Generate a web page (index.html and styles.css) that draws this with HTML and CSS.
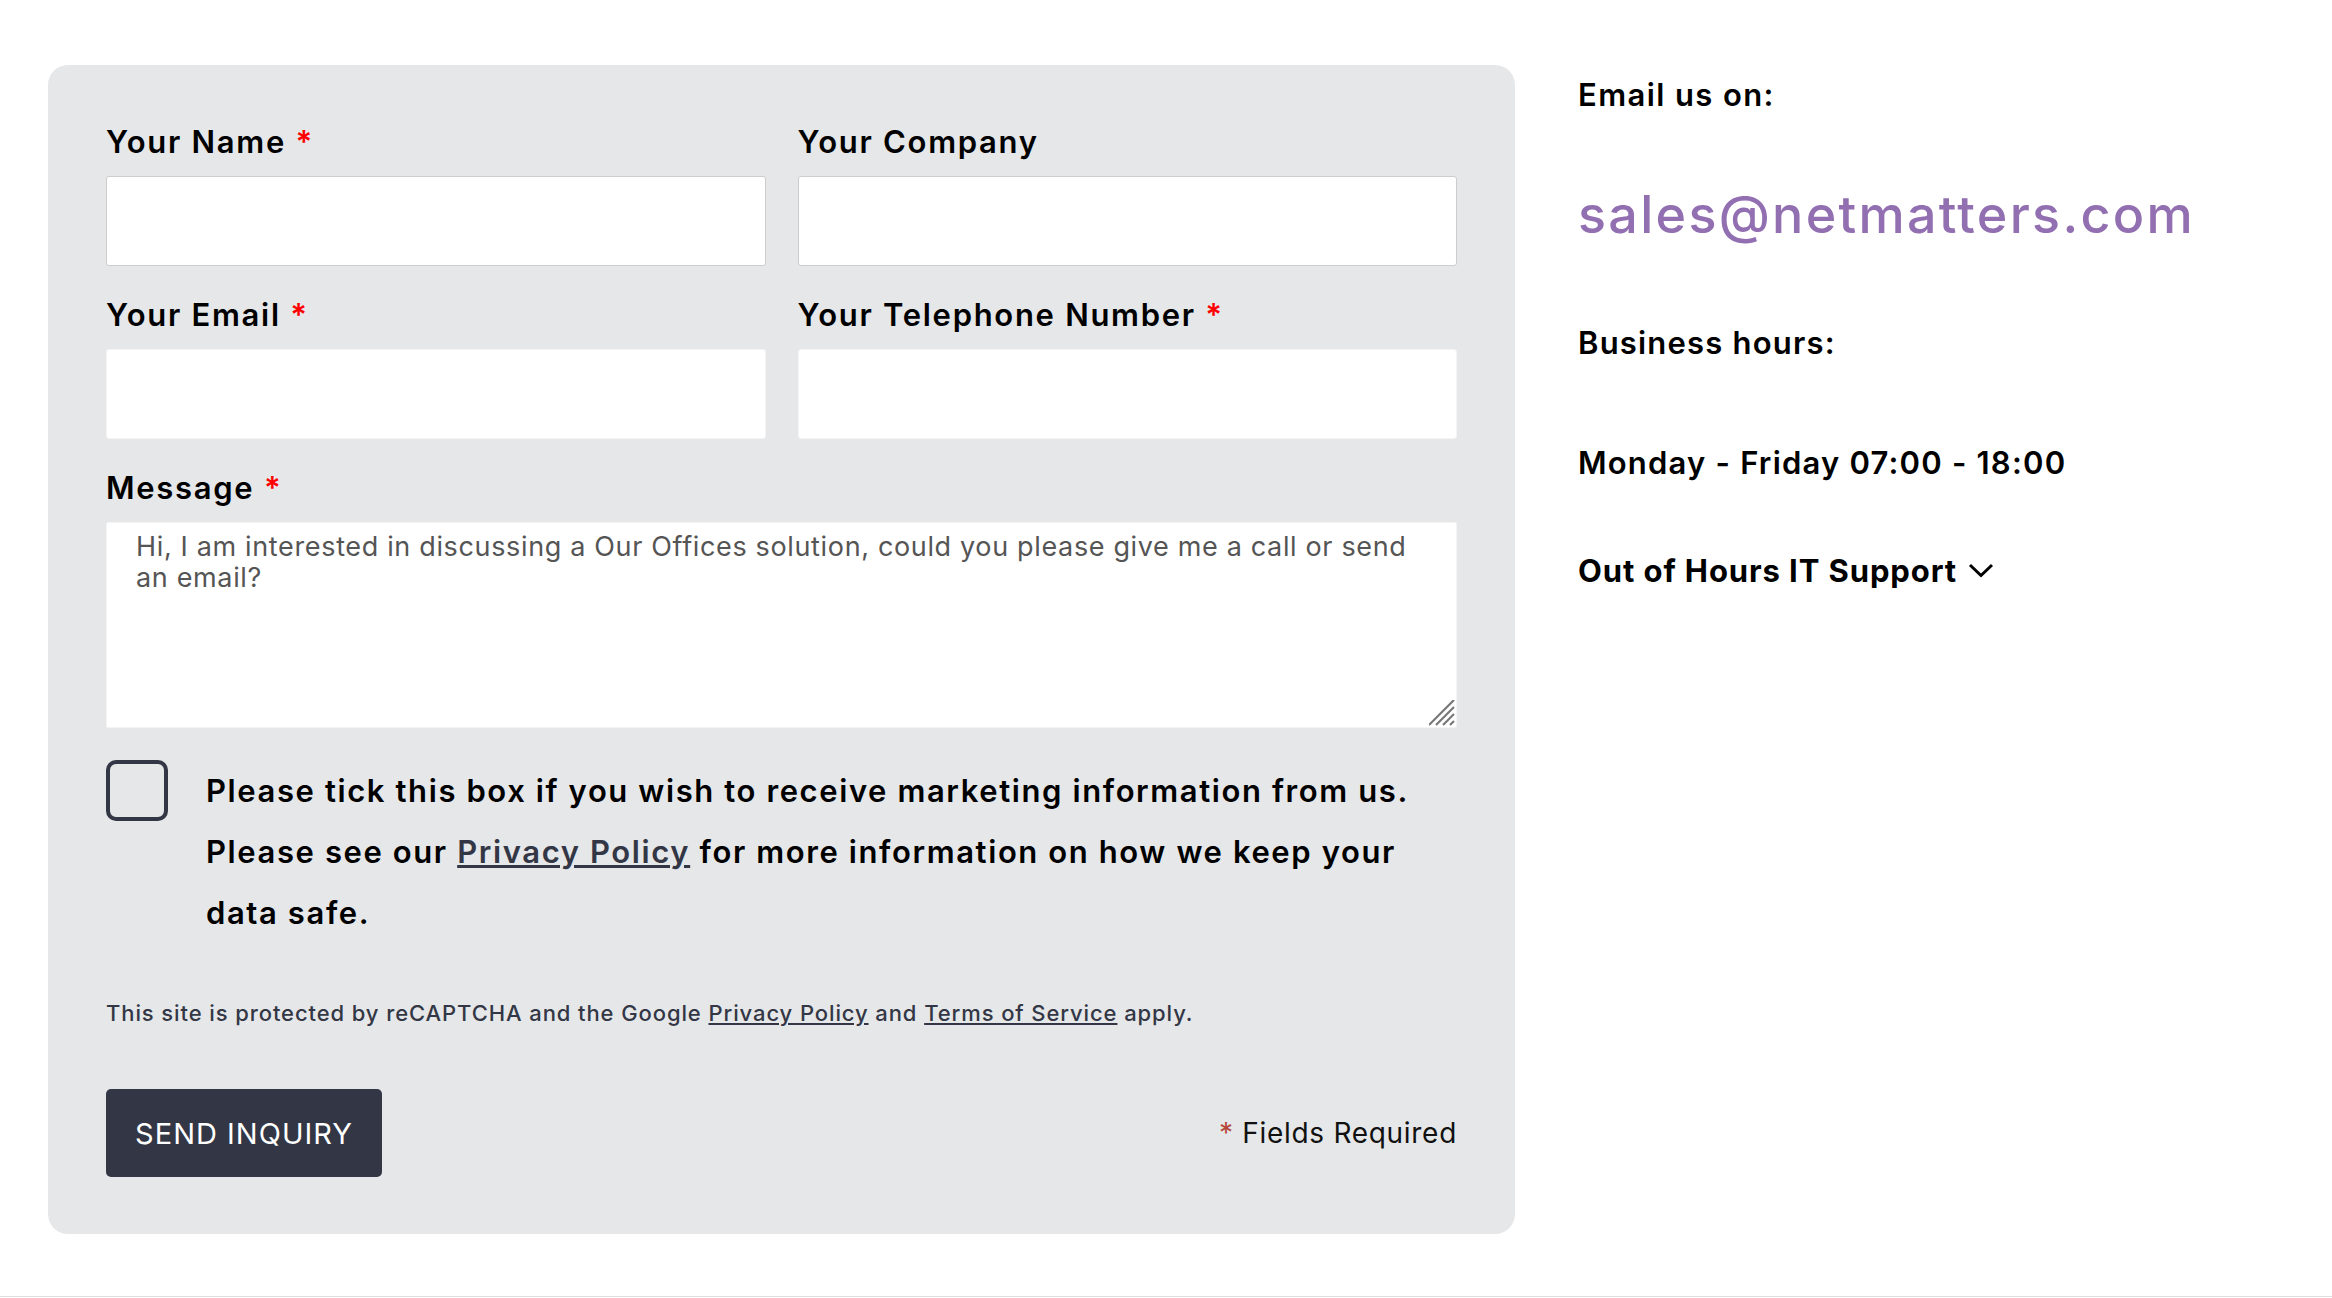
FILE: index.html
```html
<!DOCTYPE html>
<html lang="en">
<head>
<meta charset="utf-8">
<title>Contact</title>
<link rel="stylesheet" href="styles.css">
</head>
<body>
<div class="page">
  <div class="layout">
    <form class="card">
      <div class="grid">
        <div class="field">
          <label class="label">Your Name <span class="req">*</span></label>
          <input class="input bordered" type="text">
        </div>
        <div class="field">
          <label class="label">Your Company</label>
          <input class="input bordered" type="text">
        </div>
        <div class="field">
          <label class="label">Your Email <span class="req">*</span></label>
          <input class="input" type="text">
        </div>
        <div class="field">
          <label class="label">Your Telephone Number <span class="req">*</span></label>
          <input class="input" type="text">
        </div>
        <div class="field full">
          <label class="label">Message <span class="req">*</span></label>
          <div class="textarea-wrap">
            <textarea class="textarea">Hi, I am interested in discussing a Our Offices solution, could you please give me a call or send
an email?</textarea>
            <svg class="grip" width="26" height="26" viewBox="0 0 26 26"><g stroke="#777" stroke-width="2.2" stroke-linecap="butt"><line x1="0" y1="25" x2="25" y2="0"/><line x1="7" y1="25" x2="25" y2="7"/><line x1="14" y1="25" x2="25" y2="14"/><line x1="21" y1="25" x2="25" y2="21"/></g></svg>
          </div>
        </div>
      </div>
      <div class="consent">
        <span class="checkbox"></span>
        <p class="consent-text">Please tick this box if you wish to receive marketing information from us.<br>Please see our <a href="#" class="link">Privacy Policy</a> for more information on how we keep your<br>data safe.</p>
      </div>
      <p class="recaptcha">This site is protected by reCAPTCHA and the Google <a href="#" class="link">Privacy Policy</a> and <a href="#" class="link">Terms of Service</a> apply.</p>
      <div class="actions">
        <button type="button" class="send">SEND INQUIRY</button>
        <span class="required-note"><span class="req-dark">*</span> Fields Required</span>
      </div>
    </form>
    <aside class="contact">
      <p class="contact-title email-title">Email us on:</p>
      <a href="#" class="email">sales@netmatters.com</a>
      <p class="contact-title hours-title">Business hours:</p>
      <p class="contact-title hours">Monday - Friday 07:00 - 18:00</p>
      <p class="oohs">Out of Hours IT Support <svg class="chev" width="26" height="15" viewBox="0 0 26 15"><polyline points="2,2 13,12.5 24,2" fill="none" stroke="#000" stroke-width="3"/></svg></p>
    </aside>
  </div>
</div>
</body>
</html>
```

FILE: styles.css
```css
html, body {
  margin: 0;
  padding: 0;
  background: #ffffff;
}

body {
  font-family: "Inter", "Noto Sans", sans-serif;
  color: #000;
}

.page {
  height: 1297px;
  box-sizing: border-box;
  border-bottom: 1px solid #dedede;
}

.layout {
  display: flex;
  gap: 63px;
  padding: 65px 0 0 48px;
}

.card {
  width: 1467px;
  box-sizing: border-box;
  padding: 54px 58px 57px;
  background: #e6e7e9;
  border-radius: 20px;
}

.grid {
  display: grid;
  grid-template-columns: 1fr 1fr;
  column-gap: 32px;
  row-gap: 26px;
}

.field {
  display: flex;
  flex-direction: column;
}

.field.full {
  grid-column: 1 / -1;
}

.label {
  display: block;
  font-size: 31px;
  line-height: 45px;
  font-weight: 600;
  letter-spacing: 1.7px;
  margin-bottom: 12px;
}

.req {
  color: #ff0000;
}

.input {
  height: 90px;
  box-sizing: border-box;
  border: 1px solid #f4f4f4;
  border-radius: 3px;
  background: #fff;
  margin: 0;
}

.input.bordered {
  border-color: #cdcdcd;
}

.textarea-wrap {
  position: relative;
  display: flex;
}

.textarea {
  flex: 1;
  height: 206px;
  box-sizing: border-box;
  border: 1px solid #f4f4f4;
  border-radius: 2px;
  background: #fff;
  padding: 8px 29px;
  margin: 0;
  font-family: "Inter", "Noto Sans", sans-serif;
  font-size: 27px;
  line-height: 31px;
  letter-spacing: 0.65px;
  color: #555;
  resize: none;
}

.grip {
  position: absolute;
  right: 2px;
  bottom: 2px;
}

.consent {
  display: flex;
  gap: 38px;
  margin-top: 32px;
}

.checkbox {
  width: 62px;
  height: 61px;
  flex-shrink: 0;
  box-sizing: border-box;
  border: 4px solid #333745;
  border-radius: 10px;
}

.consent-text {
  margin: 0;
  font-size: 31px;
  line-height: 61px;
  font-weight: 600;
  letter-spacing: 1.6px;
  white-space: nowrap;
}

.link {
  color: #333745;
  text-decoration: underline;
}

.recaptcha {
  margin: 54px 0 0;
  font-size: 22px;
  line-height: 32px;
  font-weight: 500;
  letter-spacing: 0.9px;
  color: #333745;
}

.actions {
  display: flex;
  align-items: center;
  justify-content: space-between;
  margin-top: 60px;
}

.send {
  width: 276px;
  height: 88px;
  border: 0;
  border-radius: 5px;
  background: #333745;
  color: #fff;
  font-family: "Inter", "Noto Sans", sans-serif;
  font-size: 29px;
  font-weight: 400;
  letter-spacing: 1px;
  padding: 0;
}

.required-note {
  font-size: 28px;
  letter-spacing: 0.7px;
  color: #111;
}

.req-dark {
  color: #b5473b;
}

.contact {
  padding-top: 7px;
  display: flex;
  flex-direction: column;
  align-items: flex-start;
}

.contact-title {
  margin: 0;
  font-size: 31px;
  line-height: 45px;
  font-weight: 600;
  letter-spacing: 1.2px;
}

.email-title {
  letter-spacing: 1.4px;
}

.email {
  margin-top: 68px;
  font-size: 52px;
  line-height: 60px;
  font-weight: 500;
  letter-spacing: 2.3px;
  color: #926fb1;
  text-decoration: none;
}

.hours-title {
  margin-top: 75px;
}

.hours {
  margin-top: 75px;
}

.oohs {
  margin: 63px 0 0;
  font-size: 31px;
  line-height: 45px;
  font-weight: 700;
  letter-spacing: 0.9px;
  display: flex;
  align-items: center;
  gap: 11px;
}

.chev {
  display: block;
}
```
